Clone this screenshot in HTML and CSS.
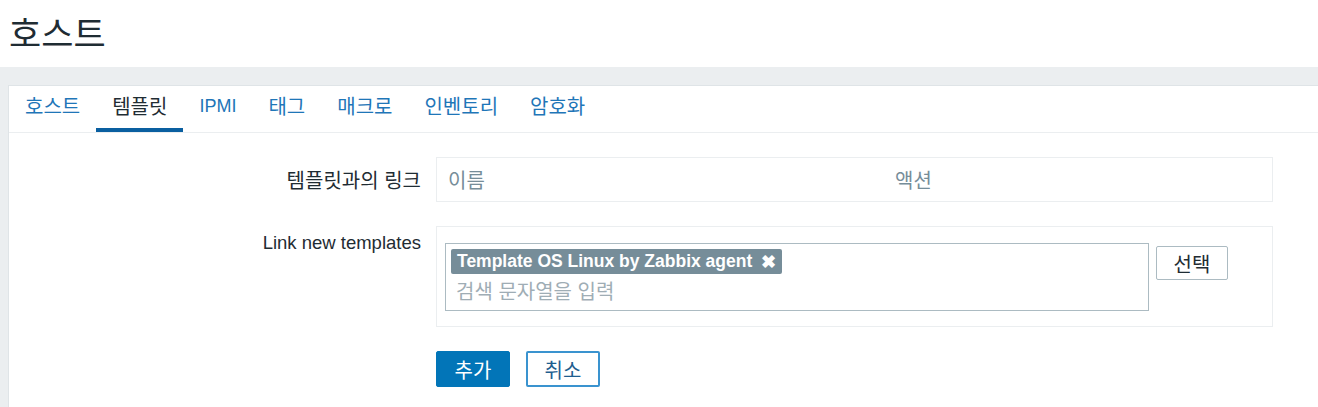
FILE: index.html
```html
<!DOCTYPE html>
<html lang="ko">
<head>
<meta charset="utf-8">
<title>호스트</title>
<link rel="stylesheet" href="styles.css">
</head>
<body>
<header class="page-header">
  <h1 class="page-title">호스트</h1>
</header>
<main class="wrap">
  <section class="panel">
    <nav class="tabs">
      <a class="tab ko">호스트</a>
      <a class="tab ko active">템플릿</a>
      <a class="tab">IPMI</a>
      <a class="tab ko">태그</a>
      <a class="tab ko">매크로</a>
      <a class="tab ko">인벤토리</a>
      <a class="tab ko">암호화</a>
    </nav>
    <form class="form">
      <div class="row row-linked">
        <div class="label ko">템플릿과의 링크</div>
        <div class="field">
          <div class="linked-table ko">
            <span class="col-name">이름</span>
            <span class="col-action">액션</span>
          </div>
        </div>
      </div>
      <div class="row row-new">
        <div class="label label-top latin">Link new templates</div>
        <div class="field">
          <div class="ms-box">
            <div class="ms-input">
              <span class="chip">Template OS Linux by Zabbix agent <span class="chip-x">✖</span></span>
              <span class="placeholder ko">검색 문자열을 입력</span>
            </div>
            <button type="button" class="btn-select ko">선택</button>
          </div>
        </div>
      </div>
      <div class="row row-buttons">
        <div class="label"></div>
        <div class="field buttons">
          <button type="button" class="btn btn-primary ko">추가</button>
          <button type="button" class="btn btn-alt ko">취소</button>
        </div>
      </div>
    </form>
  </section>
</main>
</body>
</html>
```

FILE: styles.css
```css
* { box-sizing: border-box; }
html, body { margin: 0; padding: 0; }
body {
  background: #fff;
  font-family: "Liberation Sans", Arial, "Noto Sans CJK KR", sans-serif;
  font-size: 18px;
  color: #1f2c33;
  width: 1318px;
  height: 407px;
  overflow: hidden;
}
.ko {
  font-family: "Noto Sans CJK KR", "Liberation Sans", sans-serif;
  font-size: 20px;
}
.latin { font-size: 18.5px; }
.page-header {
  height: 67px;
  display: flex;
  align-items: center;
  padding-left: 9px;
}
.page-title {
  margin: 0;
  font-family: "Noto Sans CJK KR", sans-serif;
  font-weight: 400;
  font-size: 35px;
  line-height: 1;
  color: #1f2c33;
  margin-top: -4px;
}
.wrap {
  background: #ebeef0;
  padding: 18px 0 0 8px;
  height: 340px;
}
.panel {
  background: #fff;
  border-top: 1px solid #dfe4e7;
  border-left: 1px solid #dfe4e7;
  height: 100%;
}
.tabs {
  display: flex;
  height: 47px;
  border-bottom: 1px solid #ebeef0;
}
.tab {
  color: #1f76b8;
  padding: 0 16px;
  display: flex;
  align-items: center;
  padding-bottom: 2px;
  border-bottom: 4px solid transparent;
  cursor: pointer;
  line-height: 1;
}
.tab.active {
  color: #1f2c33;
  border-bottom-color: #0a5fa0;
}
.form {
  display: flex;
  flex-direction: column;
  padding-top: 24px;
  gap: 24px;
}
.row {
  display: flex;
  gap: 15px;
}
.label {
  width: 412px;
  text-align: right;
  flex: none;
  color: #1f2c33;
  display: flex;
  align-items: center;
  justify-content: flex-end;
}
.label-top {
  align-items: flex-start;
  padding-top: 6px;
}
.field { width: 837px; }
.linked-table {
  height: 45px;
  border: 1px solid #ebeef0;
  display: flex;
  align-items: center;
  color: #768d99;
}
.col-name { width: 458px; padding-left: 11px; }
.ms-box {
  border: 1px solid #ebeef0;
  padding: 16px 8px 15px 8px;
  display: flex;
  gap: 7px;
  align-items: flex-start;
}
.ms-input {
  width: 704px;
  height: 68px;
  border: 1px solid #acbbc2;
  padding: 5px 5px;
  display: flex;
  flex-direction: column;
  align-items: flex-start;
}
.chip {
  background: #768d99;
  color: #fff;
  font-weight: bold;
  font-size: 17.5px;
  border-radius: 2px;
  height: 25px;
  line-height: 25px;
  padding: 0 6px 0 6px;
  white-space: nowrap;
  display: flex;
  align-items: center;
}
.chip-x { font-size: 18px; margin-left: 9px; line-height: 1; }
.placeholder {
  color: #9fadb5;
  padding-left: 5px;
  margin-top: 4px;
  line-height: 26px;
}
.btn-select {
  width: 72px;
  height: 34px;
  margin-top: 3px;
  background: #fff;
  border: 1px solid #acbbc2;
  border-radius: 2px;
  color: #1f2c33;
  padding: 0;
}
.buttons {
  display: flex;
  gap: 16px;
}
.btn {
  width: 74px;
  height: 36px;
  border-radius: 2px;
  padding: 0;
}
.btn-primary {
  background: #0275b8;
  border: 1px solid #0275b8;
  color: #fff;
}
.btn-alt {
  background: #fff;
  border: 2px solid #3a93cf;
  color: #1f5e8f;
}
```
